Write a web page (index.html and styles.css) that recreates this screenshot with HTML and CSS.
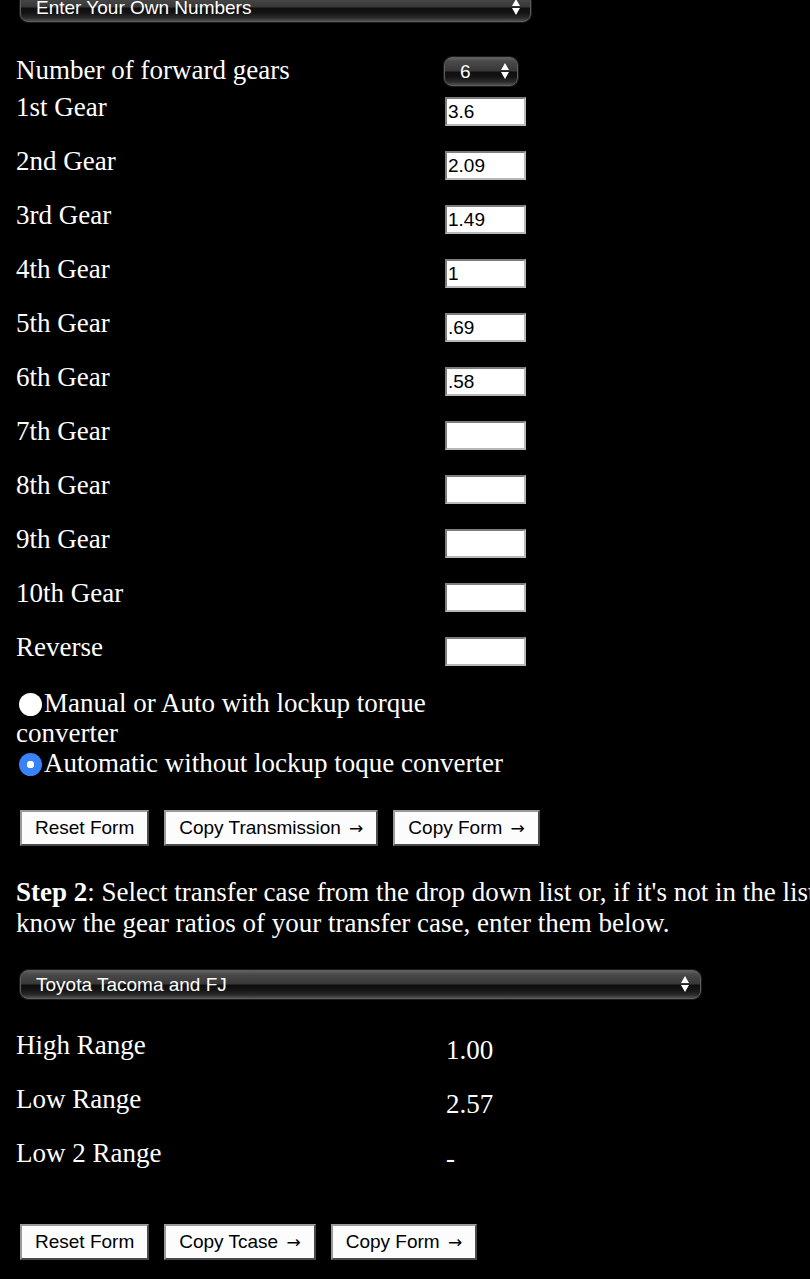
FILE: index.html
```html
<!DOCTYPE html>
<html lang="en">

<head>
    <meta charset="UTF-8" />
    <meta name="viewport" content="width=device-width, initial-scale=1.0" />
    <title>Gear Ratio Calculator</title>
    <link rel="stylesheet" href="styles.css">
</head>

<body>
    <div class="page">
        <div class="select-wrap trans-select">
            <select class="dark-select">
                <option>Enter Your Own Numbers</option>
            </select>
            <svg class="arrows" width="10" height="18" viewBox="0 0 10 18"><path d="M1 8L5 1L9 8Z M1 10L9 10L5 17Z" fill="#fff"/></svg>
        </div>

        <div class="gears">
            <div class="row first">
                <label>Number of forward gears</label>
                <div class="select-wrap count-select">
                    <select class="dark-select">
                        <option>6</option>
                    </select>
                    <svg class="arrows" width="10" height="18" viewBox="0 0 10 18"><path d="M1 8L5 1L9 8Z M1 10L9 10L5 17Z" fill="#fff"/></svg>
                </div>
            </div>
            <div class="row"><label>1st Gear</label><input type="text" value="3.6"></div>
            <div class="row"><label>2nd Gear</label><input type="text" value="2.09"></div>
            <div class="row"><label>3rd Gear</label><input type="text" value="1.49"></div>
            <div class="row"><label>4th Gear</label><input type="text" value="1"></div>
            <div class="row"><label>5th Gear</label><input type="text" value=".69"></div>
            <div class="row"><label>6th Gear</label><input type="text" value=".58"></div>
            <div class="row"><label>7th Gear</label><input type="text"></div>
            <div class="row"><label>8th Gear</label><input type="text"></div>
            <div class="row"><label>9th Gear</label><input type="text"></div>
            <div class="row"><label>10th Gear</label><input type="text"></div>
            <div class="row"><label>Reverse</label><input type="text"></div>
        </div>

        <div class="radios">
            <label><input type="radio" name="conv">Manual or Auto with lockup torque converter</label>
            <label><input type="radio" name="conv" checked>Automatic without lockup toque converter</label>
        </div>

        <div class="buttons">
            <button>Reset Form</button>
            <button>Copy Transmission <span class="arrow">&rarr;</span></button>
            <button>Copy Form <span class="arrow">&rarr;</span></button>
        </div>

        <p class="step"><b>Step 2</b>: Select transfer case from the drop down list or, if it's not in the list or you know the gear ratios of your transfer case, enter them below.</p>

        <div class="select-wrap tcase-select">
            <select class="dark-select">
                <option>Toyota Tacoma and FJ</option>
            </select>
            <svg class="arrows" width="10" height="18" viewBox="0 0 10 18"><path d="M1 8L5 1L9 8Z M1 10L9 10L5 17Z" fill="#fff"/></svg>
        </div>

        <div class="ranges">
            <div class="row"><label>High Range</label><span class="value">1.00</span></div>
            <div class="row"><label>Low Range</label><span class="value">2.57</span></div>
            <div class="row"><label>Low 2 Range</label><span class="value">-</span></div>
        </div>

        <div class="buttons bottom">
            <button>Reset Form</button>
            <button>Copy Tcase <span class="arrow">&rarr;</span></button>
            <button>Copy Form <span class="arrow">&rarr;</span></button>
        </div>
    </div>
</body>

</html>
```

FILE: styles.css
```css
body {
    margin: 0;
    background: #000;
    color: #fff;
    font-family: "Liberation Serif", "Times New Roman", serif;
    font-size: 27px;
    overflow-x: hidden;
}

.page {
    margin-top: -7px;
    padding-left: 16px;
}

/* dark glossy selects */
.select-wrap {
    position: relative;
    margin-left: 4px;
    height: 29px;
}

.dark-select {
    -webkit-appearance: none;
    appearance: none;
    display: block;
    width: 100%;
    height: 29px;
    margin: 0;
    padding: 0 30px 0 15px;
    border: 1px solid #5e5e5e;
    border-radius: 8px;
    background: linear-gradient(#616161 0%, #4a4a4a 12%, #383838 47%, #0e0e0e 53%, #141414 70%, #2a2a2a 88%, #505050 100%);
    box-shadow: 0 0 0 1px #1c1c1c;
    color: #fff;
    font-family: "Liberation Sans", Arial, sans-serif;
    font-size: 19px;
}

.arrows {
    position: absolute;
    top: 5px;
    pointer-events: none;
}

.trans-select {
    width: 511px;
}

.trans-select .arrows {
    right: 10px;
}

.count-select {
    width: 74px;
    margin: 2px 0 0 0;
}

.count-select .arrows {
    right: 8px;
}

.tcase-select {
    width: 681px;
    margin-top: 31px;
}

.tcase-select .arrows {
    right: 11px;
}

/* gear rows */
.gears {
    margin-top: 33px;
}

.row {
    display: grid;
    grid-template-columns: 428px auto;
    align-items: start;
    height: 54px;
    line-height: 31px;
}

.row.first {
    height: 37px;
}

.row input {
    width: 81px;
    height: 29px;
    box-sizing: border-box;
    margin: 5px 0 0 1px;
    padding: 0 1px;
    border: 2px solid;
    border-color: #7e7e7e #b8b8b8 #b8b8b8 #7e7e7e;
    background: #fff;
    color: #000;
    font-family: "Liberation Sans", Arial, sans-serif;
    font-size: 19px;
}

/* radio choices */
.radios {
    width: 500px;
    margin-top: 2px;
    line-height: 30px;
}

.radios label {
    display: block;
}

.radios input {
    -webkit-appearance: none;
    appearance: none;
    width: 23px;
    height: 23px;
    margin: 0 2px 0 3px;
    vertical-align: -4px;
    border-radius: 50%;
    background: #fff;
}

.radios input:checked {
    background: radial-gradient(circle, #fff 0 3.5px, #3a82f7 4px);
}

/* buttons */
.buttons {
    display: flex;
    gap: 15px;
    margin: 32px 0 0 4px;
}

.buttons button {
    height: 36px;
    padding: 0 13px;
    border: 2px solid;
    border-color: #9a9a9a #4a4a4a #4a4a4a #9a9a9a;
    background: #fcfcfc;
    color: #000;
    font-family: "Liberation Sans", Arial, sans-serif;
    font-size: 19px;
}

.arrow {
    margin-left: 3px;
    font-family: "DejaVu Sans", sans-serif;
    font-size: 17px;
}

.step {
    width: 900px;
    margin: 31px 0 0 0;
    line-height: 31px;
}

/* transfer case */
.ranges {
    margin-top: 31px;
}

.value {
    padding-top: 5px;
    padding-left: 2px;
}
```
